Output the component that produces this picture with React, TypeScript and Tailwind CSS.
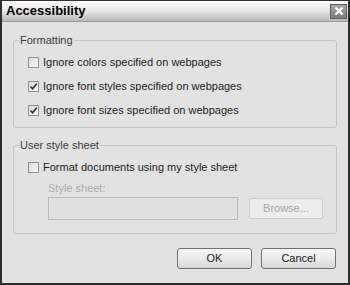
import { FC, ReactNode } from 'react'

const CheckBox: FC<{ checked?: boolean }> = ({ checked }) => (
    <span className='w-[11px] h-[11px] border border-[#8f8f8f] bg-gradient-to-br from-[#d9d9d9] to-[#fbfbfb] flex items-center justify-center shrink-0'>
        {checked && (
            <svg width='9' height='9' viewBox='0 0 9 9'>
                <path d='M1.5 4.5 L3.5 6.8 L7.8 1.8' fill='none' stroke='#2a2a2a' strokeWidth='1.6' />
            </svg>
        )}
    </span>
)

const Row: FC<{ checked?: boolean; children: ReactNode }> = ({ checked, children }) => (
    <label className='h-[24px] flex items-center gap-[4px]'>
        <CheckBox checked={checked} />
        <span>{children}</span>
    </label>
)

const Button: FC<{ children: ReactNode }> = ({ children }) => (
    <button className='w-[75px] h-[21px] rounded-[3px] border border-[#707070] bg-gradient-to-b from-[#f6f6f6] via-[#ebebeb] to-[#d6d6d6] text-[#1a1a1a]'>
        {children}
    </button>
)

export default function App() {
    return (
        <div
            className='w-[350px] h-[285px] overflow-hidden flex flex-col bg-[#e2e2e2] border-x-2 border-b-2 border-t border-[#2e2e2e] text-[11px] text-[#1c1c1c]'
            style={{ fontFamily: '"Liberation Sans", Arial, sans-serif' }}
        >
            <div className='h-[21px] flex items-center justify-between pl-[4px] pr-[1px] bg-gradient-to-b from-[#fdfdfd] via-[#e6e6e6] to-[#b9b9b9] border-b border-[#9a9a9a]'>
                <span className='text-[13px] font-bold text-black'>Accessibility</span>
                <span className='w-[17px] h-[15px] bg-gradient-to-b from-[#a8a8a8] to-[#7a7a7a] border border-[#5e5e5e] flex items-center justify-center'>
                    <svg width='10' height='10' viewBox='0 0 10 10'>
                        <path d='M1.5 1.5 L8.5 8.5 M8.5 1.5 L1.5 8.5' stroke='white' strokeWidth='2.4' />
                    </svg>
                </span>
            </div>

            <div className='flex-1 flex flex-col px-[11px] pt-[11px]'>
                <fieldset className='border border-[#c4c4c4] rounded-[3px] px-[5px] pb-[5px]'>
                    <legend className='px-[1px] leading-[14px] text-[#3a3a3a]'>Formatting</legend>
                    <div className='pl-[9px] pt-[3px]'>
                        <Row>Ignore colors specified on webpages</Row>
                        <Row checked>Ignore font styles specified on webpages</Row>
                        <Row checked>Ignore font sizes specified on webpages</Row>
                    </div>
                </fieldset>

                <fieldset className='mt-[10px] border border-[#c4c4c4] rounded-[3px] px-[5px] pb-[13px]'>
                    <legend className='px-[1px] leading-[14px] text-[#3a3a3a]'>User style sheet</legend>
                    <div className='pl-[9px] pt-[3px]'>
                        <Row>Format documents using my style sheet</Row>
                        <div className='pl-[20px]'>
                            <div className='mt-[2px] leading-[14px] text-[#a9a9a9]'>Style sheet:</div>
                            <div className='mt-[2px] flex items-center gap-[11px]'>
                                <div className='w-[190px] h-[23px] border border-[#b9b9b9] bg-[#e0e0e0]' />
                                <button className='w-[74px] h-[21px] rounded-[2px] border border-[#cdcdcd] bg-[#ececec] text-[#a6a6a6]'>
                                    Browse...
                                </button>
                            </div>
                        </div>
                    </div>
                </fieldset>

                <div className='mt-[14px] flex justify-end gap-[9px] pr-[1px]'>
                    <Button>OK</Button>
                    <Button>Cancel</Button>
                </div>
            </div>
        </div>
    )
}
